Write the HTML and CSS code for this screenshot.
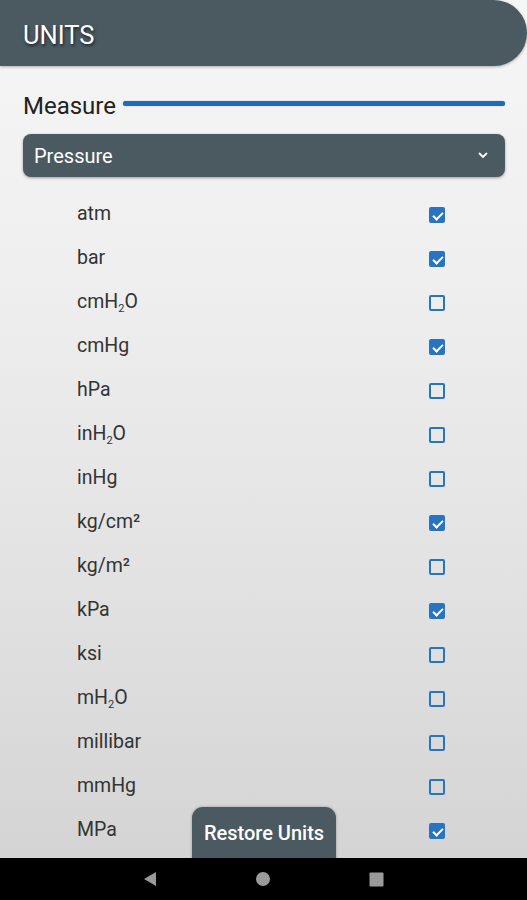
FILE: index.html
```html
<!DOCTYPE html>
<html>
<head>
<meta charset="utf-8">
<link rel="stylesheet" href="styles.css">
</head>
<body>
<div class="screen">
  <header class="appbar"><span class="title">UNITS</span></header>
  <div class="measure">
    <span class="measure-label">Measure</span>
    <span class="measure-line"></span>
  </div>
  <div class="select">
    <span>Pressure</span>
    <svg class="chev" width="12" height="8" viewBox="0 0 12 8"><path d="M2 2 L6 6 L10 2" fill="none" stroke="#fff" stroke-width="1.8"/></svg>
  </div>
  <ul class="list">
    <li><span>atm</span><i class="cb on"></i></li>
    <li><span>bar</span><i class="cb on"></i></li>
    <li><span>cmH<sub>2</sub>O</span><i class="cb"></i></li>
    <li><span>cmHg</span><i class="cb on"></i></li>
    <li><span>hPa</span><i class="cb"></i></li>
    <li><span>inH<sub>2</sub>O</span><i class="cb"></i></li>
    <li><span>inHg</span><i class="cb"></i></li>
    <li><span>kg/cm²</span><i class="cb on"></i></li>
    <li><span>kg/m²</span><i class="cb"></i></li>
    <li><span>kPa</span><i class="cb on"></i></li>
    <li><span>ksi</span><i class="cb"></i></li>
    <li><span>mH<sub>2</sub>O</span><i class="cb"></i></li>
    <li><span>millibar</span><i class="cb"></i></li>
    <li><span>mmHg</span><i class="cb"></i></li>
    <li><span>MPa</span><i class="cb on"></i></li>
  </ul>
  <button class="restore">Restore Units</button>
  <nav class="navbar">
    <svg width="14" height="16" viewBox="0 0 14 16"><path d="M13 1 L13 15 L1 8 Z" fill="#9a9a9a"/></svg>
    <svg width="16" height="16" viewBox="0 0 16 16"><circle cx="8" cy="8" r="7" fill="#9a9a9a"/></svg>
    <svg width="15" height="15" viewBox="0 0 15 15"><rect x="0.5" y="0.5" width="14" height="14" rx="1" fill="#9a9a9a"/></svg>
  </nav>
</div>
</body>
</html>
```

FILE: styles.css
```css
* { box-sizing: border-box; }
html, body { margin: 0; padding: 0; }
body {
  width: 527px;
  height: 900px;
  overflow: hidden;
  font-family: Roboto, "Liberation Sans", Arial, sans-serif;
}
.screen {
  position: relative;
  width: 527px;
  height: 900px;
  background: linear-gradient(to bottom, #f6f6f6 0%, #efefef 30%, #e4e4e4 60%, #d2d2d2 100%);
  display: flex;
  flex-direction: column;
}
.appbar {
  height: 66px;
  background: #4b5961;
  border-radius: 0 33px 33px 0;
  display: flex;
  align-items: center;
  padding-left: 23px;
  box-shadow: 0 1px 3px rgba(0,0,0,0.3);
  flex: none;
}
.title {
  color: #fff;
  font-size: 25.5px;
  text-shadow: 1px 2px 3px rgba(0,0,0,0.6);
  margin-top: 4px;
}
.measure {
  display: flex;
  align-items: center;
  margin: 25px 22px 0 23px;
  height: 28px;
}
.measure-label {
  font-size: 24px;
  color: #222;
  margin-top: 2px;
}
.measure-line {
  flex: 1;
  height: 5px;
  margin-left: 7px;
  margin-top: -3px;
  border-radius: 3px;
  background: #1f6db6;
  box-shadow: 0 0 1px rgba(0,0,0,0.5);
}
.select {
  margin: 15px 22px 0 23px;
  height: 43px;
  background: #4b5961;
  border-radius: 8px;
  display: flex;
  align-items: center;
  justify-content: space-between;
  padding: 0 16px 0 11px;
  color: #fff;
  font-size: 20px;
  box-shadow: 0 1px 3px rgba(0,0,0,0.35);
}
.chev { margin-top: -2px; }
.list {
  list-style: none;
  margin: 17px 0 0 0;
  padding: 0;
}
.list li {
  height: 44px;
  display: flex;
  align-items: center;
  justify-content: space-between;
  padding: 0 82px 0 77px;
  font-size: 19.5px;
  color: #333;
}
.list li span { line-height: 20px; margin-top: -4px; }
.list li .cb { margin-top: -2px; }
sub { font-size: 11px; vertical-align: -4px; line-height: 0; }
.cb {
  width: 16px;
  height: 16px;
  border: 2px solid #2674c2;
  border-radius: 2px;
  background: transparent;
  position: relative;
}
.cb.on {
  background: #2674c2;
}
.cb.on::after {
  content: "";
  position: absolute;
  left: 3.5px;
  top: 0.5px;
  width: 4px;
  height: 8px;
  border: solid #fff;
  border-width: 0 2px 2px 0;
  transform: rotate(45deg);
}
.restore {
  position: absolute;
  left: 192px;
  top: 807px;
  width: 144px;
  height: 60px;
  background: #4b5961;
  border: none;
  border-radius: 11px 11px 0 0;
  color: #fff;
  font-family: Roboto, "Liberation Sans", Arial, sans-serif;
  font-weight: 500;
  font-size: 20px;
  padding: 0 0 8px 0;
  box-shadow: 0 0 3px rgba(0,0,0,0.3);
}
.navbar {
  position: absolute;
  left: 0;
  bottom: 0;
  width: 527px;
  height: 42px;
  background: #000;
  display: flex;
  align-items: center;
  justify-content: center;
  gap: 98px;
}
```
